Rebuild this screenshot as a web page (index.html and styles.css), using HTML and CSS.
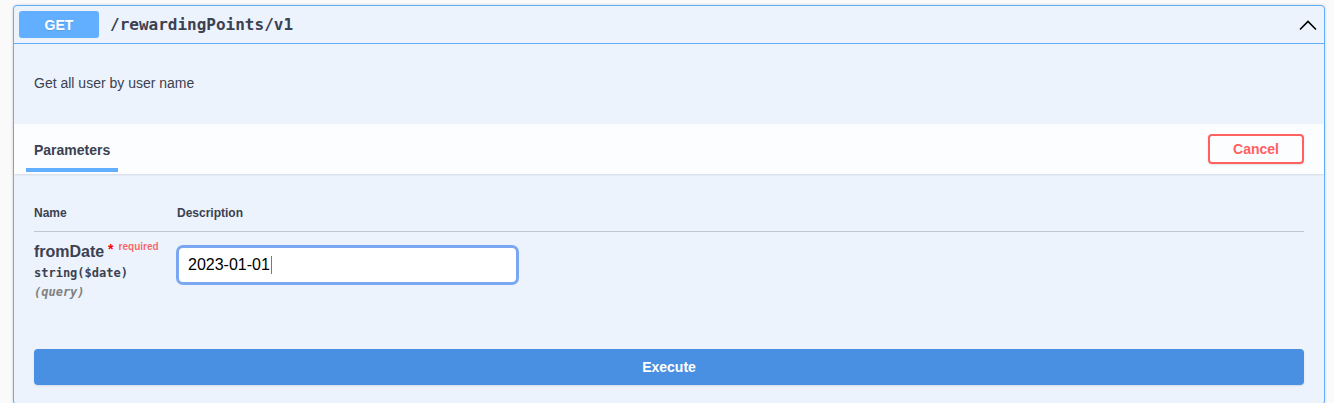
FILE: index.html
```html
<!DOCTYPE html>
<html lang="en">
<head>
<meta charset="utf-8">
<title>GET /rewardingPoints/v1</title>
<link rel="stylesheet" href="styles.css">
</head>
<body>
<div class="page">
  <div class="opblock">
    <div class="summary">
      <span class="method">GET</span>
      <span class="path">/rewardingPoints/v1</span>
      <svg class="chevron" width="20" height="20" viewBox="0 0 20 20" aria-hidden="true">
        <polyline points="2,14.5 10,6.5 18,14.5" fill="none" stroke="#000" stroke-width="1.6"/>
      </svg>
    </div>
    <div class="body">
      <div class="description">Get all user by user name</div>
      <div class="section-header">
        <div class="tab">Parameters</div>
        <button class="btn-cancel" type="button">Cancel</button>
      </div>
      <div class="table-container">
        <div class="params">
          <div class="th col-name">Name</div>
          <div class="th col-desc">Description</div>
          <div class="td col-name">
            <div class="param-name">fromDate<span class="star">&nbsp;*</span><span class="required">required</span></div>
            <div class="param-type">string<span class="fmt">($date)</span></div>
            <div class="param-in">(query)</div>
          </div>
          <div class="td col-desc">
            <div class="input-box"><span class="input-val">2023-01-01</span><span class="caret"></span></div>
          </div>
        </div>
      </div>
      <div class="execute-wrapper">
        <button class="btn-execute" type="button">Execute</button>
      </div>
    </div>
  </div>
</div>
</body>
</html>
```

FILE: styles.css
```css
* { box-sizing: border-box; }
html, body { margin: 0; padding: 0; background: #fafafa; }
body {
  font-family: "Liberation Sans", Arial, sans-serif;
  color: #3b4151;
  overflow: hidden;
}
.page {
  height: 403px;
  overflow: hidden;
  padding: 5px 9px 0 13px;
}
.opblock {
  border: 1px solid #61affe;
  border-radius: 4px;
  background: #ecf3fc;
  box-shadow: 0 0 3px rgba(0, 0, 0, 0.19);
}
.summary {
  display: flex;
  align-items: center;
  padding: 5px;
  border-bottom: 1px solid #61affe;
}
.method {
  width: 80px;
  height: 27px;
  border-radius: 3px;
  background: #61affe;
  color: #fff;
  font-weight: 700;
  font-size: 14px;
  display: flex;
  align-items: center;
  justify-content: center;
  text-shadow: 0 1px 0 rgba(0, 0, 0, 0.1);
}
.path {
  margin-left: 11px;
  font-family: "DejaVu Sans Mono", "Liberation Mono", monospace;
  font-weight: 700;
  font-size: 16px;
  color: #3b4151;
  flex: 1;
}
.chevron {
  margin-right: 1px;
}
.description {
  padding: 31px 20px 32px;
  font-size: 14px;
  line-height: 17px;
}
.section-header {
  display: flex;
  align-items: center;
  justify-content: space-between;
  height: 50px;
  padding: 0 20px 0 12px;
  background: rgba(255, 255, 255, 0.8);
  box-shadow: 0 1px 2px rgba(0, 0, 0, 0.1);
}
.tab {
  align-self: stretch;
  display: flex;
  align-items: center;
  padding: 7px 8px 0;
  font-size: 14px;
  font-weight: 700;
  border-bottom: 4px solid #61affe;
  margin-bottom: 2px;
}
.btn-cancel {
  width: 96px;
  height: 30px;
  border: 2px solid #ff6060;
  border-radius: 4px;
  background: transparent;
  color: #ff6060;
  font-family: inherit;
  font-size: 14px;
  font-weight: 700;
  box-shadow: 0 1px 2px rgba(0, 0, 0, 0.1);
  padding: 0;
}
.table-container {
  padding: 20px 20px 20px 20px;
}
.params {
  display: grid;
  grid-template-columns: 143px 1fr;
}
.th {
  font-size: 12px;
  font-weight: 700;
  line-height: 15px;
  padding: 12px 0 10px;
  border-bottom: 1px solid rgba(59, 65, 81, 0.25);
}
.td {
  padding: 10px 0 10px;
}
.param-name {
  font-size: 16px;
  font-weight: 700;
  line-height: 20px;
}
.star {
  color: red;
  font-size: 14px;
  position: relative;
  top: -3px;
}
.required {
  color: rgba(255, 0, 0, 0.6);
  font-size: 10px;
  position: relative;
  top: -7px;
  padding-left: 5px;
}
.param-type {
  font-family: "DejaVu Sans Mono", "Liberation Mono", monospace;
  font-size: 12px;
  font-weight: 600;
  line-height: 15px;
  margin-top: 2px;
}
.param-in {
  font-family: "DejaVu Sans Mono", "Liberation Mono", monospace;
  font-size: 12px;
  font-style: italic;
  font-weight: 600;
  color: gray;
  line-height: 15px;
  margin-top: 4px;
}
.input-box {
  margin-top: 3px;
  margin-left: -1px;
  width: 343px;
  height: 40px;
  border: 3px solid #7ba7f2;
  border-radius: 7px;
  background: #fff;
  display: flex;
  align-items: center;
  padding: 0 9px;
  font-size: 16px;
  color: #000;
}
.caret {
  display: inline-block;
  width: 1px;
  height: 18px;
  background: #3b82f6;
  margin-left: 1px;
}
.execute-wrapper {
  padding: 19px 20px 19px;
}
.btn-execute {
  width: 100%;
  height: 36px;
  border: none;
  border-radius: 4px;
  background: #4990e2;
  color: #fff;
  font-family: inherit;
  font-size: 14px;
  font-weight: 700;
  box-shadow: 0 1px 2px rgba(0, 0, 0, 0.1);
}
```
